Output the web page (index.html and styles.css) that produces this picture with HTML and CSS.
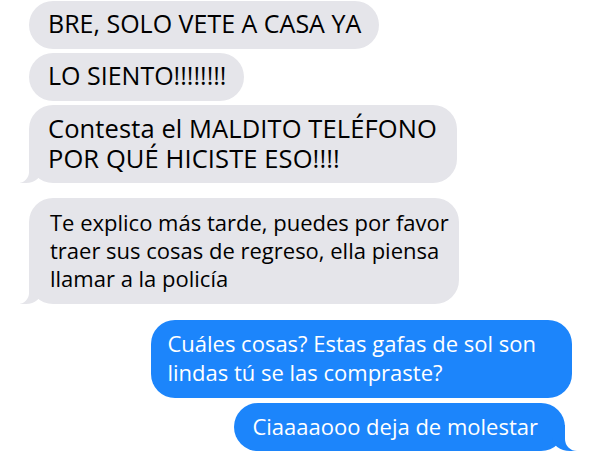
FILE: index.html
```html
<!DOCTYPE html>
<html lang="es">
<head>
  <meta charset="UTF-8">
  <meta name="viewport" content="width=device-width, initial-scale=1.0">
  <title>Mensajes</title>
  <link rel="stylesheet" href="styles.css">
</head>
<body>
  <div class="chat">
    <p class="msg them first">BRE, SOLO VETE A CASA YA</p>
    <p class="msg them">LO SIENTO!!!!!!!!</p>
    <p class="msg them tail wide">Contesta el MALDITO TELÉFONO<br>POR QUÉ HICISTE ESO!!!!</p>
    <p class="msg them tail small">Te explico más tarde, puedes por favor<br>traer sus cosas de regreso, ella piensa<br>llamar a la policía</p>
    <p class="msg me group">Cuáles cosas? Estas gafas de sol son<br>lindas tú se las compraste?</p>
    <p class="msg me tail last">Ciaaaaooo deja de molestar</p>
  </div>
</body>
</html>
```

FILE: styles.css
```css
html, body {
  overflow: hidden;
}
body {
  margin: 0;
  background-color: #ffffff;
  font-family: "Open Sans", "Noto Sans", sans-serif;
}
.chat {
  display: flex;
  flex-direction: column;
  padding: 1px 0 0;
}
.msg {
  position: relative;
  margin: 4px 0 0;
  padding: 7px 18px 11px 19px;
  font-size: 25px;
  line-height: 30px;
  border-radius: 24px;
  color: #000;
}
.them {
  align-self: flex-start;
  margin-left: 29px;
  background-color: #e5e5ea;
}
.first {
  margin-top: 0;
}
.wide {
  padding: 8px 20px 10px 19px;
  font-size: 25.5px;
  letter-spacing: 0.1px;
}
.small {
  margin-top: 15px;
  padding: 10px 10px 12px 21px;
  font-size: 22px;
  line-height: 28px;
}
.me {
  align-self: flex-end;
  background-color: #1c85fb;
  color: #fff;
  font-size: 22px;
}
.group {
  margin-top: 16px;
  margin-right: 28px;
  padding: 9px 36px 11px 16px;
  line-height: 29px;
}
.last {
  margin-top: 5px;
  margin-right: 35px;
  padding: 8px 27px 10px 18px;
}

/* colitas de los globos */
.them.tail::before {
  content: "";
  position: absolute;
  bottom: 0;
  left: -9px;
  width: 22px;
  height: 24px;
  background-color: #e5e5ea;
  border-bottom-right-radius: 16px 14px;
}
.them.tail::after {
  content: "";
  position: absolute;
  bottom: 0;
  left: -26px;
  width: 26px;
  height: 24px;
  background-color: #ffffff;
  border-bottom-right-radius: 11px;
}
.me.tail::before {
  content: "";
  position: absolute;
  bottom: 0;
  right: -13px;
  width: 26px;
  height: 26px;
  background-color: #1c85fb;
  border-bottom-left-radius: 18px 14px;
}
.me.tail::after {
  content: "";
  position: absolute;
  bottom: 0;
  right: -30px;
  width: 30px;
  height: 26px;
  background-color: #ffffff;
  border-bottom-left-radius: 12px;
}
```
